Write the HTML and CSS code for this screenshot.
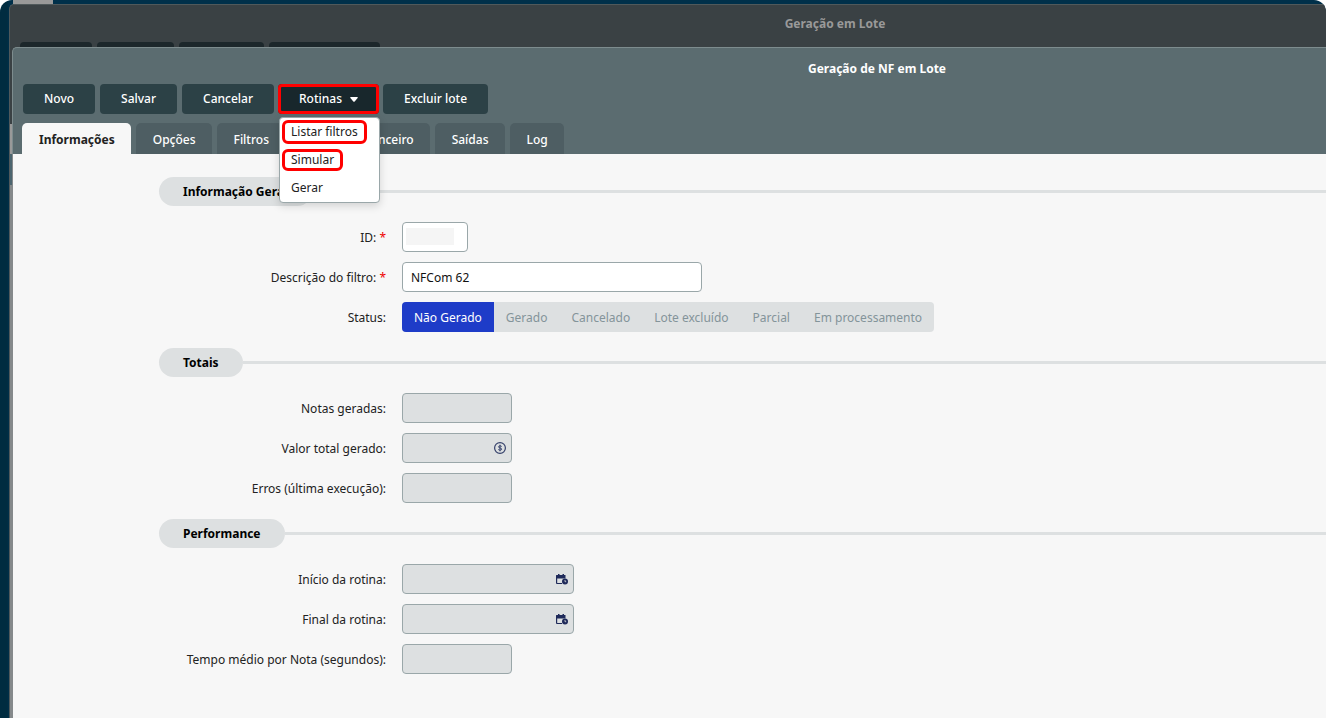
FILE: index.html
```html
<!DOCTYPE html>
<html lang="pt-BR">
<head>
<meta charset="utf-8">
<title>Geração de NF em Lote</title>
<link rel="stylesheet" href="styles.css">
</head>
<body>
<svg width="0" height="0" class="sprite" aria-hidden="true">
  <symbol id="calendar" viewBox="0 0 12 12">
    <path d="M2 1h1.500v1h3V1H8v1h1.500v3.500H1.200V10H6v1H1a1 1 0 0 1-1-1V2.500Q0 2 .5 2H2z"/>
    <circle cx="9" cy="8.500" r="3"/>
    <path d="M9 7v1.700h1.200" fill="none" stroke="#dde0e1" stroke-width=".8"/>
  </symbol>
</svg>
<div class="desktop">
  <span class="desktop-tab"></span>
  <section class="window window-back">
    <header class="back-header">
      <h2 class="title back-title">Geração em Lote</h2>
      <div class="back-buttons"><span class="g1"></span><span class="g2"></span><span class="g3"></span><span class="g4"></span></div>
    </header>
    <main class="window window-front">
      <header class="header">
        <h1 class="title">Geração de NF em Lote</h1>
        <div class="toolbar">
          <button class="btn">Novo</button>
          <button class="btn">Salvar</button>
          <button class="btn">Cancelar</button>
          <div class="dropdown">
            <button class="btn btn-open" aria-expanded="true">Rotinas
              <svg class="caret" viewBox="0 0 8 5" aria-hidden="true"><path d="M.8 0h6.400q1 0 .4.900L4.700 4.500q-.7.700-1.400 0L.4.900Q-.2 0 .8 0z"/></svg>
            </button>
            <div class="menu">
              <button class="menu-item"><span class="mark mark-list">Listar filtros</span></button>
              <button class="menu-item"><span class="mark mark-sim">Simular</span></button>
              <button class="menu-item">Gerar</button>
            </div>
          </div>
          <button class="btn">Excluir lote</button>
        </div>
        <nav class="tabs">
          <button class="tab tab-active">Informações</button>
          <button class="tab">Opções</button>
          <button class="tab">Filtros</button>
          <button class="tab">Módulo Financeiro</button>
          <button class="tab">Saídas</button>
          <button class="tab">Log</button>
        </nav>
      </header>
      <form class="form">
        <div class="section"><h3 class="pill">Informação Geral</h3></div>
        <div class="fields">
          <label for="id">ID: <b class="req">*</b></label>
          <div class="control w-id"><input id="id" type="text"><span class="redacted"></span></div>
          <label for="desc">Descrição do filtro: <b class="req">*</b></label>
          <div class="control w-desc"><input id="desc" type="text" value="NFCom 62"></div>
          <span class="label" id="status">Status:</span>
          <div class="segments" role="group" aria-labelledby="status">
            <button type="button" class="seg seg-on">Não Gerado</button>
            <button type="button" class="seg">Gerado</button>
            <button type="button" class="seg">Cancelado</button>
            <button type="button" class="seg">Lote excluído</button>
            <button type="button" class="seg">Parcial</button>
            <button type="button" class="seg">Em processamento</button>
          </div>
        </div>
        <div class="section"><h3 class="pill">Totais</h3></div>
        <div class="fields">
          <label for="notas">Notas geradas:</label>
          <div class="control w-num"><input id="notas" type="text" disabled></div>
          <label for="valor">Valor total gerado:</label>
          <div class="control w-num"><input id="valor" type="text" disabled>
            <svg class="icon" viewBox="0 0 12 12" aria-hidden="true"><circle cx="6" cy="6" r="5.400" fill="none" stroke="#35416b" stroke-width="1.200"/><path d="M7.700 4.500C7.300 3.700 4.500 3.500 4.500 4.900c0 1.500 3.200.700 3.200 2.200 0 1.400-2.800 1.300-3.400.400M6 2.700v6.600" fill="none" stroke="#35416b"/></svg>
          </div>
          <label for="erros">Erros (última execução):</label>
          <div class="control w-num"><input id="erros" type="text" disabled></div>
        </div>
        <div class="section"><h3 class="pill">Performance</h3></div>
        <div class="fields">
          <label for="inicio">Início da rotina:</label>
          <div class="control w-date"><input id="inicio" type="text" disabled><svg class="icon" aria-hidden="true"><use href="#calendar"/></svg></div>
          <label for="final">Final da rotina:</label>
          <div class="control w-date"><input id="final" type="text" disabled><svg class="icon" aria-hidden="true"><use href="#calendar"/></svg></div>
          <label for="tempo">Tempo médio por Nota (segundos):</label>
          <div class="control w-num"><input id="tempo" type="text" disabled></div>
        </div>
      </form>
    </main>
  </section>
</div>
</body>
</html>
```
FILE: styles.css
```css
* { box-sizing: border-box; }
body { margin: 0; background: #fff; font: 12px/16px "Noto Sans", "Open Sans", sans-serif; color: #222; }
button, input { font: inherit; color: inherit; margin: 0; }
button { border: 0; cursor: pointer; white-space: nowrap; }
h1, h2, h3 { margin: 0; font-size: 12px; line-height: 16px; }
.sprite { position: absolute; }

.desktop {
  position: relative;
  display: flex;
  min-height: 100vh;
  padding: 4px 0 0 9px;
  border-radius: 12px;
  overflow: hidden;
  background: linear-gradient(90deg, #002c40 7px, #00304a 9px);
}
.desktop-tab { position: absolute; left: 13px; top: 0; width: 40px; height: 4px; background: #999; }

.window { display: flex; flex-direction: column; flex: 1; min-width: 0; border-radius: 5px 0 0 0; }
.window-back {
  border-top: 1px solid #50595b;
  border-left: 1px solid #50595b;
  background: linear-gradient(#3a4144 119px, #999 119px, #999 149px, #4c656f 149px, #4c656f 180px, #85898b 180px);
}
.back-header { height: 42px; padding: 11px 0 0 10px; }
.title { text-align: center; color: #fff; }
.back-title { color: #999; padding-left: 324px; }
.back-buttons { display: flex; margin-top: 10px; }
.back-buttons span { height: 5px; border-radius: 4px 4px 0 0; background: #1c272b; }
.g1 { width: 72px; }
.g2 { width: 77px; margin-left: 5px; }
.g3 { width: 85px; margin-left: 5px; }
.g4 { width: 111px; margin-left: 5px; }

.window-front { margin-left: 2px; }
.header {
  padding: 13px 0 0 9px;
  border-top: 1px solid #7d8c8e;
  border-left: 1px solid #7d8c8e;
  border-radius: 5px 0 0 0;
  background: #5b6c70;
}
.header .title { padding-left: 406px; }
.toolbar { display: flex; gap: 5px; margin: 7px 0 9px 1px; }
.btn {
  height: 30px;
  padding: 0 21px;
  border-radius: 4px;
  background: #2c4146;
  color: #fff;
  font-weight: 500;
}
.dropdown { position: relative; margin: 0 -1px; }
.btn-open {
  display: flex;
  align-items: center;
  gap: 8px;
  background: #18272c;
  box-shadow: inset 0 0 0 3px #f00;
}
.caret { width: 8px; height: 5px; fill: #fff; }
.menu {
  position: absolute;
  left: 1px;
  top: 33px;
  z-index: 2;
  width: 101px;
  border: 1px solid #9aa7a9;
  border-radius: 4px;
  background: #fff;
  box-shadow: 0 3px 8px rgba(0, 0, 0, .15);
}
.menu-item { display: flex; align-items: center; width: 100%; height: 28px; padding: 0 11px; background: none; text-align: left; }
.mark { position: relative; }
.mark::after { content: ""; position: absolute; border: 3px solid #f00; border-radius: 6px; }
.mark-list::after { inset: -4px -9px; }
.mark-sim::after { inset: -3px -9px; }

.tabs { display: flex; gap: 5px; }
.tab { height: 31px; padding: 2px 16px 0 17px; border-radius: 5px 5px 0 0; background: #4e5e63; color: #fff; font-weight: 500; }
.tab-active { background: #f7f7f7; color: #222; font-weight: 700; }

.form { flex: 1; padding: 23px 0 44px 146px; border-left: 1px solid #85898b; background: #f7f7f7; background-clip: padding-box; }
.section { display: flex; align-items: center; }
.section::after { content: ""; flex: 1; height: 3px; background: #dde0e1; }
.pill { padding: 7px 24px 6px; border-radius: 15px; background: #dde0e1; color: #000; }
.fields { display: grid; grid-template-columns: 227px 1fr; gap: 10px 16px; margin: 16px 0; align-items: center; }
.fields label, .label { padding-top: 2px; text-align: right; white-space: nowrap; }
.req { color: #e00; font-weight: 400; }
.control { position: relative; height: 30px; }
.control input { width: 100%; height: 30px; padding: 0 8px; border: 1px solid #9aa7a9; border-radius: 4px; background: #fff; color: #111; }
.control input:disabled { background: #dde0e1; }
.w-id { width: 66px; }
.w-desc { width: 300px; }
.w-num { width: 110px; }
.w-date { width: 172px; }
.redacted { position: absolute; left: 4px; top: 6px; width: 48px; height: 17px; background: #f5f5f5; }
.icon { position: absolute; right: 6px; top: 9px; width: 12px; height: 12px; fill: #1f2a5a; }
.segments { display: flex; justify-self: start; border-radius: 4px; overflow: hidden; background: #dde0e1; }
.seg { height: 30px; padding: 2px 12px 0; background: none; color: #84949a; }
.seg-on { background: #1e3cc8; color: #fff; }
```
